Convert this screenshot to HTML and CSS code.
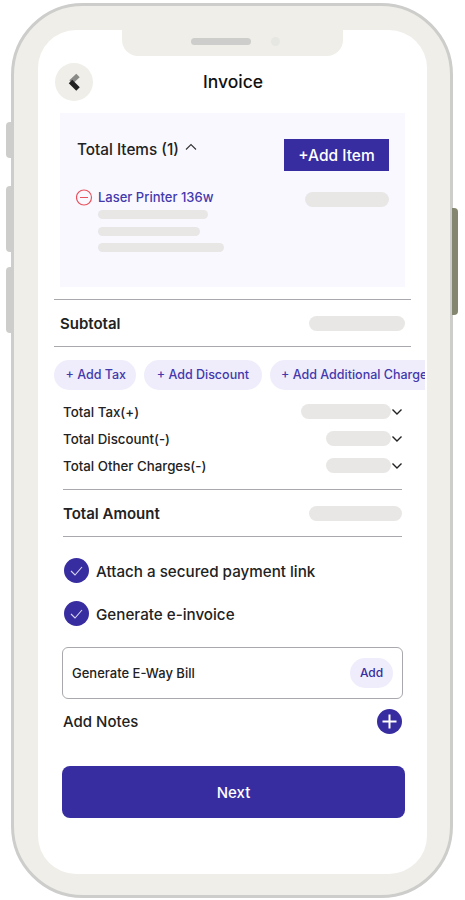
FILE: index.html
```html
<!DOCTYPE html>
<html lang="en">
<head>
    <meta charset="UTF-8">
    <meta name="viewport" content="width=device-width, initial-scale=1.0">
    <title>Invoice</title>
    <link rel="stylesheet" href="styles.css">
</head>
<body>
    <div class="phone">
        <span class="side-btn side-btn-1"></span>
        <span class="side-btn side-btn-2"></span>
        <span class="side-btn side-btn-3"></span>
        <span class="power-btn"></span>

        <div class="screen">
            <div class="notch">
                <span class="speaker"></span>
                <span class="camera"></span>
            </div>

            <div class="header">
                <a class="back" href="#">
                    <svg width="38" height="38" viewBox="0 0 38 38">
                        <path d="M23 12.5L16 19" fill="none" stroke="#8a8a88" stroke-width="5"/>
                        <path d="M15.5 18.5L23 26" fill="none" stroke="#222" stroke-width="5"/>
                    </svg>
                </a>
                <h1>Invoice</h1>
            </div>

            <div class="card">
                <div class="card-top">
                    <div class="items-title">
                        Total Items (1)
                        <svg width="12" height="8" viewBox="0 0 12 8"><path d="M1 6.5L6 1.5L11 6.5" fill="none" stroke="#333" stroke-width="1.1"/></svg>
                    </div>
                    <button class="add-item">+Add Item</button>
                </div>
                <div class="item">
                    <svg class="minus" width="17" height="17" viewBox="0 0 17 17">
                        <circle cx="8" cy="8.5" r="7.5" fill="none" stroke="#e8525c" stroke-width="1.2"/>
                        <path d="M4 8.5H12" stroke="#e8525c" stroke-width="1.2"/>
                    </svg>
                    <div class="item-info">
                        <div class="item-name">Laser Printer 136w</div>
                        <div class="skel skel-line w110"></div>
                        <div class="skel skel-line w102"></div>
                        <div class="skel skel-line w126"></div>
                    </div>
                    <div class="skel item-price"></div>
                </div>
            </div>

            <div class="subtotal">
                <span>Subtotal</span>
                <div class="skel pill-96"></div>
            </div>

            <div class="chips">
                <a class="chip" href="#">+ Add Tax</a>
                <a class="chip" href="#">+ Add Discount</a>
                <a class="chip" href="#">+ Add Additional Charges</a>
            </div>

            <div class="charges">
                <div class="charge">
                    <span>Total Tax(+)</span>
                    <div class="skel pill-90"></div>
                    <svg width="12" height="8" viewBox="0 0 12 8"><path d="M1.5 1.5L6 6L10.5 1.5" fill="none" stroke="#222" stroke-width="1.4"/></svg>
                </div>
                <div class="charge">
                    <span>Total Discount(-)</span>
                    <div class="skel pill-65"></div>
                    <svg width="12" height="8" viewBox="0 0 12 8"><path d="M1.5 1.5L6 6L10.5 1.5" fill="none" stroke="#222" stroke-width="1.4"/></svg>
                </div>
                <div class="charge">
                    <span>Total Other Charges(-)</span>
                    <div class="skel pill-65"></div>
                    <svg width="12" height="8" viewBox="0 0 12 8"><path d="M1.5 1.5L6 6L10.5 1.5" fill="none" stroke="#222" stroke-width="1.4"/></svg>
                </div>
            </div>

            <div class="total">
                <span>Total Amount</span>
                <div class="skel pill-93"></div>
            </div>

            <div class="check-row first">
                <svg width="25" height="25" viewBox="0 0 25 25">
                    <circle cx="12.5" cy="12.5" r="12.5" fill="#372da0"/>
                    <path d="M7 13L11 17L18 9" fill="none" stroke="#d9d6f2" stroke-width="1.1"/>
                </svg>
                <span>Attach a secured payment link</span>
            </div>
            <div class="check-row">
                <svg width="25" height="25" viewBox="0 0 25 25">
                    <circle cx="12.5" cy="12.5" r="12.5" fill="#372da0"/>
                    <path d="M7 13L11 17L18 9" fill="none" stroke="#d9d6f2" stroke-width="1.1"/>
                </svg>
                <span>Generate e-invoice</span>
            </div>

            <div class="eway">
                <span>Generate E-Way Bill</span>
                <a class="eway-add" href="#">Add</a>
            </div>

            <div class="notes">
                <span>Add Notes</span>
                <svg width="25" height="25" viewBox="0 0 25 25">
                    <circle cx="12.5" cy="12.5" r="12.5" fill="#372da0"/>
                    <path d="M12.5 5.5V19.5M5.5 12.5H19.5" stroke="#fff" stroke-width="2"/>
                </svg>
            </div>

            <button class="next">Next</button>
        </div>
    </div>
</body>
</html>
```

FILE: styles.css
```css
* {
    box-sizing: border-box;
}

body {
    margin: 0;
    padding: 3px 0 0 11px;
    background-color: #fff;
    font-family: 'Inter', sans-serif;
    color: #222;
}

a {
    text-decoration: none;
}

.phone {
    position: relative;
    width: 442px;
    height: 895px;
    padding: 24px 23px 21px 24px;
    background-color: #efeee9;
    border: 3px solid #cdcdcb;
    border-radius: 72px;
}

.side-btn,
.power-btn {
    position: absolute;
    width: 6px;
}

.side-btn {
    left: -8px;
    background-color: #cdcdcb;
    border-radius: 4px 0 0 4px;
}

.side-btn-1 {
    top: 116px;
    height: 36px;
}

.side-btn-2 {
    top: 180px;
    height: 66px;
}

.side-btn-3 {
    top: 261px;
    height: 66px;
}

.power-btn {
    top: 202px;
    right: -8px;
    height: 107px;
    background-color: #85866f;
    border-radius: 0 4px 4px 0;
}

.screen {
    height: 844px;
    background-color: #fff;
    border-radius: 38px;
    overflow: hidden;
}

/* notch */
.notch {
    display: flex;
    align-items: center;
    justify-content: center;
    gap: 20px;
    width: 221px;
    height: 26px;
    margin-left: 84px;
    padding: 0 0 4px 0;
    background-color: #efeee9;
    border-radius: 0 0 16px 16px;
}

.speaker {
    width: 60px;
    height: 7px;
    margin-left: 5px;
    background-color: #cdcdcb;
    border-radius: 4px;
}

.camera {
    width: 9px;
    height: 9px;
    background-color: #e6e6e3;
    border-radius: 50%;
}

/* header */
.header {
    display: grid;
    grid-template-columns: 38px 1fr 38px;
    align-items: center;
    margin: 7px 17px 0;
}

.back {
    width: 38px;
    height: 38px;
    background-color: #efeee9;
    border-radius: 50%;
}

.back svg {
    display: block;
}

h1 {
    margin: 0 0 1px;
    padding-left: 1px;
    font-size: 17.5px;
    font-weight: 500;
    text-align: center;
    color: #111;
}

/* items card */
.card {
    width: 345px;
    height: 174px;
    margin: 12px 0 0 22px;
    padding: 26px 16px 0 17px;
    background-color: #f9f8ff;
}

.card-top {
    display: flex;
    justify-content: space-between;
    align-items: flex-start;
}

.items-title {
    display: flex;
    align-items: center;
    gap: 6px;
    height: 20px;
    font-size: 15.3px;
    font-weight: 500;
}

.items-title svg {
    margin-bottom: 5px;
}

.add-item {
    width: 105px;
    height: 32px;
    background-color: #372da0;
    border: none;
    color: #fff;
    font-family: inherit;
    font-size: 15.5px;
    font-weight: 500;
}

.item {
    display: flex;
    align-items: flex-start;
    margin: 18px 0 0 -1px;
}

.minus {
    flex: none;
    margin-right: 5px;
}

.item-info {
    flex: 1;
}

.item-name {
    height: 18px;
    margin-bottom: 3px;
    color: #4338ac;
    font-size: 13px;
    font-weight: 500;
    line-height: 17px;
}

.skel {
    flex: none;
    height: 15px;
    background-color: #e8e7e5;
    border-radius: 8px;
}

.skel-line {
    height: 9px;
    margin-bottom: 7.5px;
    border-radius: 5px;
}

.w110 {
    width: 110px;
}

.w102 {
    width: 102px;
}

.w126 {
    width: 126px;
}

.item-price {
    width: 84px;
    margin-top: 3px;
}

/* subtotal */
.subtotal {
    display: flex;
    justify-content: space-between;
    align-items: center;
    width: 357px;
    height: 48px;
    margin: 12px 0 0 16px;
    padding: 0 6px;
    border-top: 1px solid #a9a9ad;
    border-bottom: 1px solid #a9a9ad;
    font-size: 15px;
    font-weight: 600;
}

.pill-96 {
    width: 96px;
}

.pill-93 {
    width: 93px;
}

.pill-90 {
    width: 90px;
}

.pill-65 {
    width: 65px;
}

/* chips */
.chips {
    display: flex;
    gap: 8px;
    width: 371px;
    margin: 13px 0 0 16px;
    overflow: hidden;
}

.chip {
    flex: none;
    height: 30px;
    padding: 0 11.5px;
    background-color: #efedfb;
    border-radius: 15px;
    color: #4338ac;
    font-size: 12.5px;
    font-weight: 500;
    line-height: 30px;
    white-space: nowrap;
}

.chip:first-child {
    padding: 0 10px 0 11.5px;
}

.chip:nth-child(2) {
    padding: 0 12.7px;
}

/* charges */
.charges {
    margin: 8px 0 0 25px;
    width: 340px;
}

.charge {
    display: flex;
    align-items: center;
    height: 27px;
    font-size: 13.3px;
    font-weight: 500;
}

.charge span {
    flex: 1;
}

.charge svg {
    flex: none;
}

/* total */
.total {
    display: flex;
    justify-content: space-between;
    align-items: center;
    width: 339px;
    height: 48px;
    margin: 10px 0 0 25px;
    border-top: 1px solid #a9a9ad;
    border-bottom: 1px solid #a9a9ad;
    font-size: 15px;
    font-weight: 600;
}

.total span {
    padding-top: 1px;
}

/* checkboxes */
.check-row {
    display: flex;
    align-items: center;
    gap: 7px;
    height: 25px;
    margin: 18px 0 0 26px;
    font-size: 15.2px;
    font-weight: 500;
}

.check-row.first {
    margin-top: 21px;
}

.check-row span {
    padding-top: 1px;
}

/* e-way bill */
.eway {
    display: flex;
    justify-content: space-between;
    align-items: center;
    width: 341px;
    height: 52px;
    margin: 21px 0 0 24px;
    padding: 0 9px 0 9px;
    border: 1px solid #a9a9ad;
    border-radius: 6px;
    font-size: 13px;
    font-weight: 500;
}

.eway-add {
    width: 43px;
    height: 30px;
    background-color: #efedfb;
    border-radius: 15px;
    color: #372da0;
    font-size: 12px;
    font-weight: 500;
    line-height: 30px;
    text-align: center;
}

/* notes */
.notes {
    display: flex;
    justify-content: space-between;
    align-items: center;
    width: 339px;
    height: 25px;
    margin: 10px 0 0 25px;
    font-size: 15px;
    font-weight: 500;
}

.next {
    display: block;
    width: 343px;
    height: 52px;
    margin: 32px 0 0 24px;
    background-color: #372da0;
    border: none;
    border-radius: 8px;
    color: #fff;
    font-family: inherit;
    font-size: 15px;
    font-weight: 500;
}
```
